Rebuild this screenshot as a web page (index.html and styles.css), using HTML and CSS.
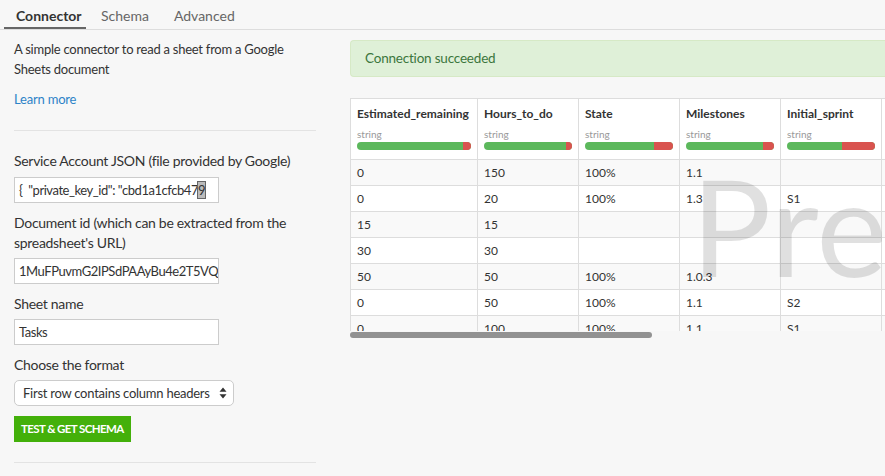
FILE: index.html
```html
<!DOCTYPE html>
<html>
<head>
<meta charset="utf-8">
<link rel="stylesheet" href="styles.css">
</head>
<body>
<div class="tabs">
  <div class="tab active">Connector</div>
  <div class="tab">Schema</div>
  <div class="tab">Advanced</div>
</div>
<div class="main">
  <div class="left">
    <p class="desc">A simple connector to read a sheet from a Google Sheets document</p>
    <a class="learn">Learn more</a>
    <hr class="sep">
    <label class="lbl first">Service Account JSON (file provided by Google)</label>
    <div class="input"><span class="val">{&nbsp; "private_key_id": "cbd1a1cfcb47<span class="cur">9</span></span></div>
    <label class="lbl">Document id (which can be extracted from the spreadsheet's URL)</label>
    <div class="input"><span class="val">1MuFPuvmG2IPSdPAAyBu4e2T5VQv</span></div>
    <label class="lbl">Sheet name</label>
    <div class="input"><span class="val">Tasks</span></div>
    <label class="lbl">Choose the format</label>
    <div class="select"><span>First row contains column headers</span>
      <svg class="arrows" width="8" height="12" viewBox="0 0 8 12"><path d="M4 0.5L7.5 4.8H0.5Z M4 11.5L7.5 7.2H0.5Z" fill="#333"/></svg>
    </div>
    <div class="btn">TEST &amp; GET SCHEMA</div>
    <hr class="sep bottom">
  </div>
  <div class="right">
    <div class="alert">Connection succeeded</div>
    <div class="preview">
      <div class="scroller">
        <table class="grid">
          <thead>
            <tr>
              <th class="c1"><div class="name">Estimated_remaining</div><div class="type">string</div><div class="bar"><div class="bad" style="width:7%"></div></div></th>
              <th class="c2"><div class="name">Hours_to_do</div><div class="type">string</div><div class="bar"><div class="bad" style="width:7%"></div></div></th>
              <th class="c2"><div class="name">State</div><div class="type">string</div><div class="bar"><div class="bad" style="width:22%"></div></div></th>
              <th class="c2"><div class="name">Milestones</div><div class="type">string</div><div class="bar"><div class="bad" style="width:13%"></div></div></th>
              <th class="c2"><div class="name">Initial_sprint</div><div class="type">string</div><div class="bar"><div class="bad" style="width:38%"></div></div></th>
              <th class="c2"><div class="name">Sprint</div><div class="type">string</div><div class="bar"><div class="bad" style="width:30%"></div></div></th>
            </tr>
          </thead>
          <tbody>
            <tr><td>0</td><td>150</td><td>100%</td><td>1.1</td><td></td><td></td></tr>
            <tr><td>0</td><td>20</td><td>100%</td><td>1.3</td><td>S1</td><td></td></tr>
            <tr><td>15</td><td>15</td><td></td><td></td><td></td><td></td></tr>
            <tr><td>30</td><td>30</td><td></td><td></td><td></td><td></td></tr>
            <tr><td>50</td><td>50</td><td>100%</td><td>1.0.3</td><td></td><td></td></tr>
            <tr><td>0</td><td>50</td><td>100%</td><td>1.1</td><td>S2</td><td></td></tr>
            <tr><td>0</td><td>100</td><td>100%</td><td>1.1</td><td>S1</td><td></td></tr>
          </tbody>
        </table>
        <div class="watermark">Preview</div>
      </div>
      <div class="thumb"></div>
    </div>
  </div>
</div>
</body>
</html>
```
FILE: styles.css
```css
html, body {
  margin: 0;
  padding: 0;
  background: #f7f7f7;
  font-family: "Source Sans Pro", Lato, "Liberation Sans", sans-serif;
  color: #333;
  overflow: hidden;
}
.tabs {
  display: flex;
  height: 29px;
  border-bottom: 1px solid #ddd;
  padding-left: 4px;
  font-size: 14px;
}
.tab {
  padding: 7px 0 0;
  color: #666;
  box-sizing: border-box;
  height: 29px;
}
.tab:nth-child(2) { margin-left: 15px; }
.tab:nth-child(3) { margin-left: 25px; }
.tab.active {
  width: 82px;
  padding-left: 12px;
  font-weight: bold;
  color: #333;
  border-bottom: 2px solid #666;
}
.main {
  display: flex;
}
.left {
  width: 302px;
  padding: 0 14px;
  flex: none;
}
.desc {
  margin: 9px 0 0;
  font-size: 13px;
  letter-spacing: -0.25px;
  line-height: 20px;
  width: 290px;
}
.learn {
  display: block;
  margin-top: 10px;
  color: #2d83c8;
  font-size: 13px;
  letter-spacing: -0.2px;
  line-height: 20px;
}
.sep {
  border: 0;
  border-top: 1px solid #e3e3e3;
  margin: 21px 0 0;
}
.lbl {
  display: block;
  font-size: 14px;
  letter-spacing: -0.3px;
  line-height: 20px;
  margin-top: 10px;
  margin-bottom: 5px;
}
.lbl.first { margin-top: 20px; margin-bottom: 6px; }
.input {
  width: 205px;
  height: 26px;
  box-sizing: border-box;
  border: 1px solid #ccc;
  background: #fff;
  font-size: 13px;
  letter-spacing: -0.45px;
  line-height: 24px;
  padding: 0 4px;
  overflow: hidden;
  white-space: nowrap;
}
.cur {
  background: #bbb;
  outline: 1px solid #666;
}
.select {
  width: 220px;
  height: 26px;
  box-sizing: border-box;
  border: 1px solid #ccc;
  border-radius: 5px;
  background: #fff;
  font-size: 13px;
  letter-spacing: -0.25px;
  display: flex;
  align-items: center;
  justify-content: space-between;
  padding: 0 6px 0 8px;
  white-space: nowrap;
}
.btn {
  display: inline-block;
  margin-top: 10px;
  background: #43b00a;
  color: #fff;
  font-weight: bold;
  font-size: 11.5px;
  letter-spacing: -0.6px;
  line-height: 26px;
  height: 26px;
  padding: 0 7px;
  white-space: nowrap;
  vertical-align: top;
}
.sep.bottom { margin-top: 20px; }
.right {
  flex: 1;
  min-width: 0;
  padding-left: 20px;
  padding-top: 10px;
}
.alert {
  height: 37px;
  box-sizing: border-box;
  background: #dff0d8;
  border: 1px solid #d6e9c6;
  border-right: 0;
  border-radius: 4px 0 0 4px;
  color: #3c763d;
  font-size: 13.5px;
  letter-spacing: -0.2px;
  line-height: 35px;
  padding-left: 14px;
  margin-right: -10px;
}
.preview {
  margin-top: 21px;
  position: relative;
}
.scroller {
  height: 233px;
  overflow: hidden;
  position: relative;
}
.grid {
  border-collapse: collapse;
  table-layout: fixed;
  width: 632px;
  background: #fff;
  border: 1px solid #ddd;
}
.grid th, .grid td {
  border: 1px solid #ddd;
  padding: 0 6px;
  text-align: left;
}
.grid th {
  height: 61px;
  vertical-align: top;
  padding-top: 7px;
  box-sizing: border-box;
}
.c1 { width: 127px; }
.c2 { width: 101px; }
.name {
  font-size: 12px;
  font-weight: bold;
  line-height: 16px;
  white-space: nowrap;
}
.type {
  font-size: 10px;
  color: #999;
  font-weight: normal;
  line-height: 12px;
  margin-top: 6px;
}
.bar {
  margin-top: 2px;
  height: 8px;
  border-radius: 4px;
  background: #5cb85c;
  display: flex;
  justify-content: flex-end;
  overflow: hidden;
}
.bad { background: #d9534f; height: 100%; }
.grid td {
  height: 26px;
  font-size: 12px;
  box-sizing: border-box;
}
.grid tbody tr:nth-child(odd) { background: #f9f9f9; }
.watermark {
  position: absolute;
  left: 341px;
  top: 61px;
  font-size: 134px;
  font-weight: normal;
  font-family: Lato, "Open Sans", sans-serif;
  color: rgba(0,0,0,0.12);
  white-space: nowrap;
  line-height: 1;
  pointer-events: none;
}
.thumb {
  width: 302px;
  height: 6px;
  border-radius: 3px;
  background: #929292;
  margin-top: 1px;
}
```
